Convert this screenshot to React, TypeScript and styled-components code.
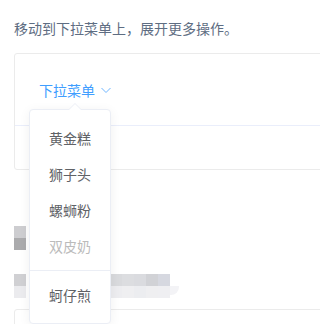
import styled, { createGlobalStyle } from 'styled-components';

const GlobalStyle = createGlobalStyle`
  html, body {
    margin: 0;
    padding: 0;
    background: #ffffff;
    overflow: hidden;
  }
  body {
    font-family: 'Noto Sans CJK SC', 'Noto Sans', sans-serif;
  }
`;

const MENU_ITEMS = [
  { label: '黄金糕' },
  { label: '狮子头' },
  { label: '螺蛳粉' },
  { label: '双皮奶', disabled: true },
  { label: '蚵仔煎', divided: true },
];

// pixelated rows that sit behind the open menu (12px tiles, null = empty)
const MOSAIC: (string | null)[][] = [
  ['#cdcdd0'],
  ['#ababad'],
  [null],
  [null],
  ['#d0d0d3', null, null, null, null, null, null, null, '#d9dadd', '#dcdde0', '#dadbdf', '#d1d2d6', '#d6d8e0'],
  ['#ebebee', null, null, null, null, null, null, null, '#ededf0', '#efeff1', '#ecedf0', '#efeff1', '#efeff2'],
];

export default function App() {
  return (
    <>
      <GlobalStyle />
      <Page>
        <Description>移动到下拉菜单上，展开更多操作。</Description>
        <DemoBlock>
          <Source>
            <Dropdown>
              <Trigger>
                下拉菜单
                <ChevronDown viewBox="0 0 12 12" aria-hidden="true">
                  <polyline points="1.5,4 6,8.5 10.5,4" />
                </ChevronDown>
              </Trigger>
              <Menu>
                <Arrow />
                {MENU_ITEMS.map((item) => (
                  <MenuItem key={item.label} $disabled={item.disabled} $divided={item.divided}>
                    {item.label}
                  </MenuItem>
                ))}
              </Menu>
            </Dropdown>
          </Source>
          <Control />
        </DemoBlock>
        <Mosaic>
          {MOSAIC.map((row, r) => (
            <MosaicRow key={r}>
              {row.map((c, i) => (
                <Tile key={i} $color={c} />
              ))}
              {r === 5 && <TileEnd />}
            </MosaicRow>
          ))}
        </Mosaic>
        <NextBlock />
      </Page>
    </>
  );
}

const Page = styled.div`
  width: 100vw;
  height: 324px;
  box-sizing: border-box;
  overflow: hidden;
  padding: 18px 0 0 14px;
`;

const Description = styled.p`
  margin: 0 0 14px;
  font-size: 14px;
  line-height: 21px;
  color: #5e6d82;
  white-space: nowrap;
`;

const DemoBlock = styled.div`
  width: 900px;
  border: 1px solid #ebebeb;
  border-radius: 3px;
`;

const Source = styled.div`
  padding: 23px 24px 24px;
`;

const Control = styled.div`
  height: 43px;
  border-top: 1px solid #eaeefb;
`;

const Dropdown = styled.div`
  position: relative;
  display: inline-block;
`;

const Trigger = styled.span`
  display: inline-flex;
  align-items: center;
  font-size: 14px;
  line-height: 20px;
  color: #409eff;
  cursor: pointer;
`;

const ChevronDown = styled.svg`
  width: 12px;
  height: 12px;
  margin-left: 5px;
  fill: none;
  stroke: #409eff;
  stroke-width: 1;
  opacity: 0.75;
`;

const Menu = styled.ul`
  position: absolute;
  top: 32px;
  left: -10px;
  z-index: 10;
  margin: 0;
  padding: 10px 0;
  list-style: none;
  background: #ffffff;
  border: 1px solid #ebeef5;
  border-radius: 4px;
  box-shadow: 0 2px 12px 0 rgba(0, 0, 0, 0.06);
`;

const Arrow = styled.span`
  position: absolute;
  top: -7px;
  left: 39px;
  width: 0;
  height: 0;
  border-style: solid;
  border-width: 0 6px 6px;
  border-color: transparent transparent #ebeef5;

  &::after {
    content: '';
    position: absolute;
    top: 1px;
    left: -6px;
    border-style: solid;
    border-width: 0 6px 6px;
    border-color: transparent transparent #ffffff;
  }
`;

const MenuItem = styled.li<{ $disabled?: boolean; $divided?: boolean }>`
  position: relative;
  padding: 0 19px 0 19px;
  font-size: 14px;
  line-height: 36px;
  white-space: nowrap;
  color: ${(p) => (p.$disabled ? '#bbbbbb' : '#606266')};
  ${(p) =>
    p.$divided &&
    `
    margin-top: 6px;
    border-top: 1px solid #ebeef5;
    &::before {
      content: '';
      display: block;
      height: 6px;
    }
  `}
`;

const Mosaic = styled.div`
  margin-top: 56px;
  display: flex;
  flex-direction: column;
`;

const MosaicRow = styled.div`
  display: flex;
  height: 12px;
`;

const Tile = styled.span<{ $color: string | null }>`
  width: 12px;
  height: 12px;
  background: ${(p) => p.$color ?? 'transparent'};
`;

const TileEnd = styled.span`
  width: 9px;
  height: 9px;
  background: #f3f3f6;
  border-bottom-right-radius: 8px;
`;

const NextBlock = styled.div`
  width: 900px;
  margin-top: 11px;
  height: 40px;
  border: 1px solid #ebebeb;
  border-radius: 3px;
`;
